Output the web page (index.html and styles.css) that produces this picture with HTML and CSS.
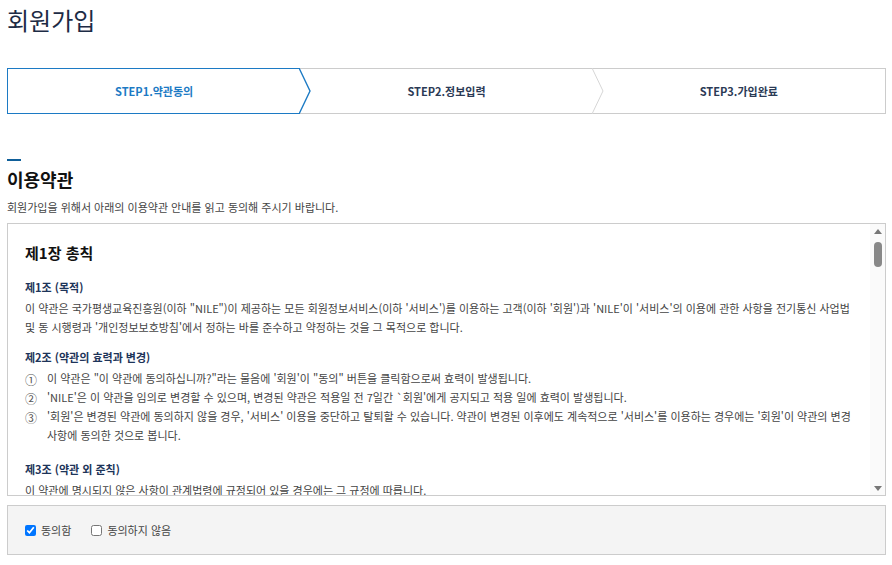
FILE: index.html
```html
<!doctype html>
<html lang="ko">
  <head>
    <meta charset="UTF-8" />
    <meta name="viewport" content="width=device-width, initial-scale=1.0" />
    <title>회원가입</title>
    <link rel="stylesheet" href="styles.css">
  </head>
  <body>
    <h1 class="page-title">회원가입</h1>

    <!-- 단계 표시 -->
    <ol class="steps">
      <li class="step on">
        STEP1.약관동의
        <svg class="chev" viewBox="0 0 12 46" aria-hidden="true"><polyline points="0,0 11,23 0,46" /></svg>
      </li>
      <li class="step">
        STEP2.정보입력
        <svg class="chev" viewBox="0 0 12 46" aria-hidden="true"><polyline points="0,0 11,23 0,46" /></svg>
      </li>
      <li class="step">STEP3.가입완료</li>
    </ol>

    <!-- 이용약관 -->
    <section class="terms">
      <span class="bar"></span>
      <h2>이용약관</h2>
      <p class="desc">회원가입을 위해서 아래의 이용약관 안내를 읽고 동의해 주시기 바랍니다.</p>

      <div class="terms-box">
        <div class="terms-content">
          <h3>제1장 총칙</h3>

          <h4>제1조 (목적)</h4>
          <p>이 약관은 국가평생교육진흥원(이하 "NILE")이 제공하는 모든 회원정보서비스(이하 '서비스')를 이용하는 고객(이하 '회원')과 'NILE'이 '서비스'의 이용에 관한 사항을 전기통신 사업법 및 동 시행령과 '개인정보보호방침'에서 정하는 바를 준수하고 약정하는 것을 그 목적으로 합니다.</p>

          <h4>제2조 (약관의 효력과 변경)</h4>
          <ul class="num-list">
            <li><span class="num">①</span>이 약관은 "이 약관에 동의하십니까?"라는 물음에 '회원'이 "동의" 버튼을 클릭함으로써 효력이 발생됩니다.</li>
            <li><span class="num">②</span>'NILE'은 이 약관을 임의로 변경할 수 있으며, 변경된 약관은 적용일 전 7일간 `회원'에게 공지되고 적용 일에 효력이 발생됩니다.</li>
            <li><span class="num">③</span>'회원'은 변경된 약관에 동의하지 않을 경우, '서비스' 이용을 중단하고 탈퇴할 수 있습니다. 약관이 변경된 이후에도 계속적으로 '서비스'를 이용하는 경우에는 '회원'이 약관의 변경 사항에 동의한 것으로 봅니다.</li>
          </ul>

          <h4>제3조 (약관 외 준칙)</h4>
          <p>이 약관에 명시되지 않은 사항이 관계법령에 규정되어 있을 경우에는 그 규정에 따릅니다.</p>
        </div>

        <!-- 스크롤바 -->
        <div class="scrollbar" aria-hidden="true">
          <span class="arrow up"></span>
          <span class="thumb"></span>
          <span class="arrow down"></span>
        </div>
      </div>

      <div class="agree">
        <label><input type="checkbox" checked /> 동의함</label>
        <label><input type="checkbox" /> 동의하지 않음</label>
      </div>
    </section>
  </body>
</html>
```

FILE: styles.css
```css
* {
  margin: 0;
  padding: 0;
  box-sizing: border-box;
}
body {
  font-family: "Noto Sans CJK KR", "Noto Sans", sans-serif;
  color: #333;
  padding: 0 6px 0 7px;
  background: #fff;
}
.page-title {
  font-size: 24px;
  font-weight: 400;
  color: #1d2b45;
  line-height: 34px;
  padding-top: 3px;
}
.steps {
  list-style: none;
  display: flex;
  border: 1px solid #ccc;
  margin-top: 31px;
  height: 46px;
}
.step {
  flex: 1;
  position: relative;
  display: flex;
  align-items: center;
  justify-content: center;
  font-size: 11px;
  font-weight: 700;
  color: #2b3a55;
}
.step.on {
  color: #1c7ac4;
  border: 1px solid #1c7ac4;
  border-right: none;
  margin: -1px 0 -1px -1px;
  height: 46px;
}
.chev {
  position: absolute;
  top: -1px;
  right: -11px;
  width: 12px;
  height: 46px;
  z-index: 1;
}
.chev polyline {
  fill: #fff;
  stroke: #d6d6d6;
  stroke-width: 1;
}
.step.on .chev polyline {
  stroke: #1c7ac4;
  stroke-width: 1.4;
}
.terms {
  margin-top: 45px;
}
.bar {
  display: block;
  width: 14px;
  height: 2px;
  background: #0f5f99;
}
.terms h2 {
  font-size: 18px;
  font-weight: 700;
  color: #111;
  margin-top: 5px;
  line-height: 26px;
}
.desc {
  font-size: 11px;
  color: #444;
  margin-top: 7px;
  line-height: 16px;
}
.terms-box {
  margin-top: 8px;
  height: 273px;
  border: 1px solid #ccc;
  display: flex;
}
.terms-content {
  flex: 1;
  overflow: hidden;
  padding: 18px 10px 0 17px;
  word-break: keep-all;
}
.scrollbar {
  width: 15px;
  background: #fafafa;
  display: flex;
  flex-direction: column;
  align-items: center;
  padding: 5px 0 4px;
}
.arrow {
  width: 0;
  height: 0;
  border-left: 4px solid transparent;
  border-right: 4px solid transparent;
}
.arrow.up {
  border-bottom: 5px solid #777;
}
.arrow.down {
  border-top: 5px solid #777;
  margin-top: auto;
}
.thumb {
  width: 8px;
  height: 25px;
  margin-top: 8px;
  border-radius: 4px;
  background: #888;
}
.terms-content h3 {
  font-size: 15px;
  font-weight: 700;
  color: #111;
  line-height: 22px;
  margin-bottom: 15px;
}
.terms-content h4 {
  font-size: 11px;
  font-weight: 700;
  color: #1d3459;
  line-height: 16px;
  margin-bottom: 4px;
}
.terms-content p {
  font-size: 11px;
  color: #444;
  line-height: 19px;
  margin-bottom: 12px;
}
.num-list {
  list-style: none;
  margin-top: 3px;
  margin-bottom: 16px;
}
.num-list li {
  position: relative;
  font-size: 11px;
  color: #444;
  line-height: 19px;
  padding-left: 22px;
}
.num {
  position: absolute;
  left: 0;
  top: 1px;
  font-size: 12px;
  color: #555;
}
.agree {
  margin-top: 9px;
  height: 50px;
  border: 1px solid #ccc;
  background: #f4f4f4;
  display: flex;
  align-items: center;
  gap: 20px;
  padding-left: 17px;
}
.agree label {
  font-size: 11px;
  line-height: 16px;
  color: #444;
  display: flex;
  align-items: center;
  gap: 5px;
}
.agree input {
  width: 11px;
  height: 11px;
  margin: 0;
}
```
